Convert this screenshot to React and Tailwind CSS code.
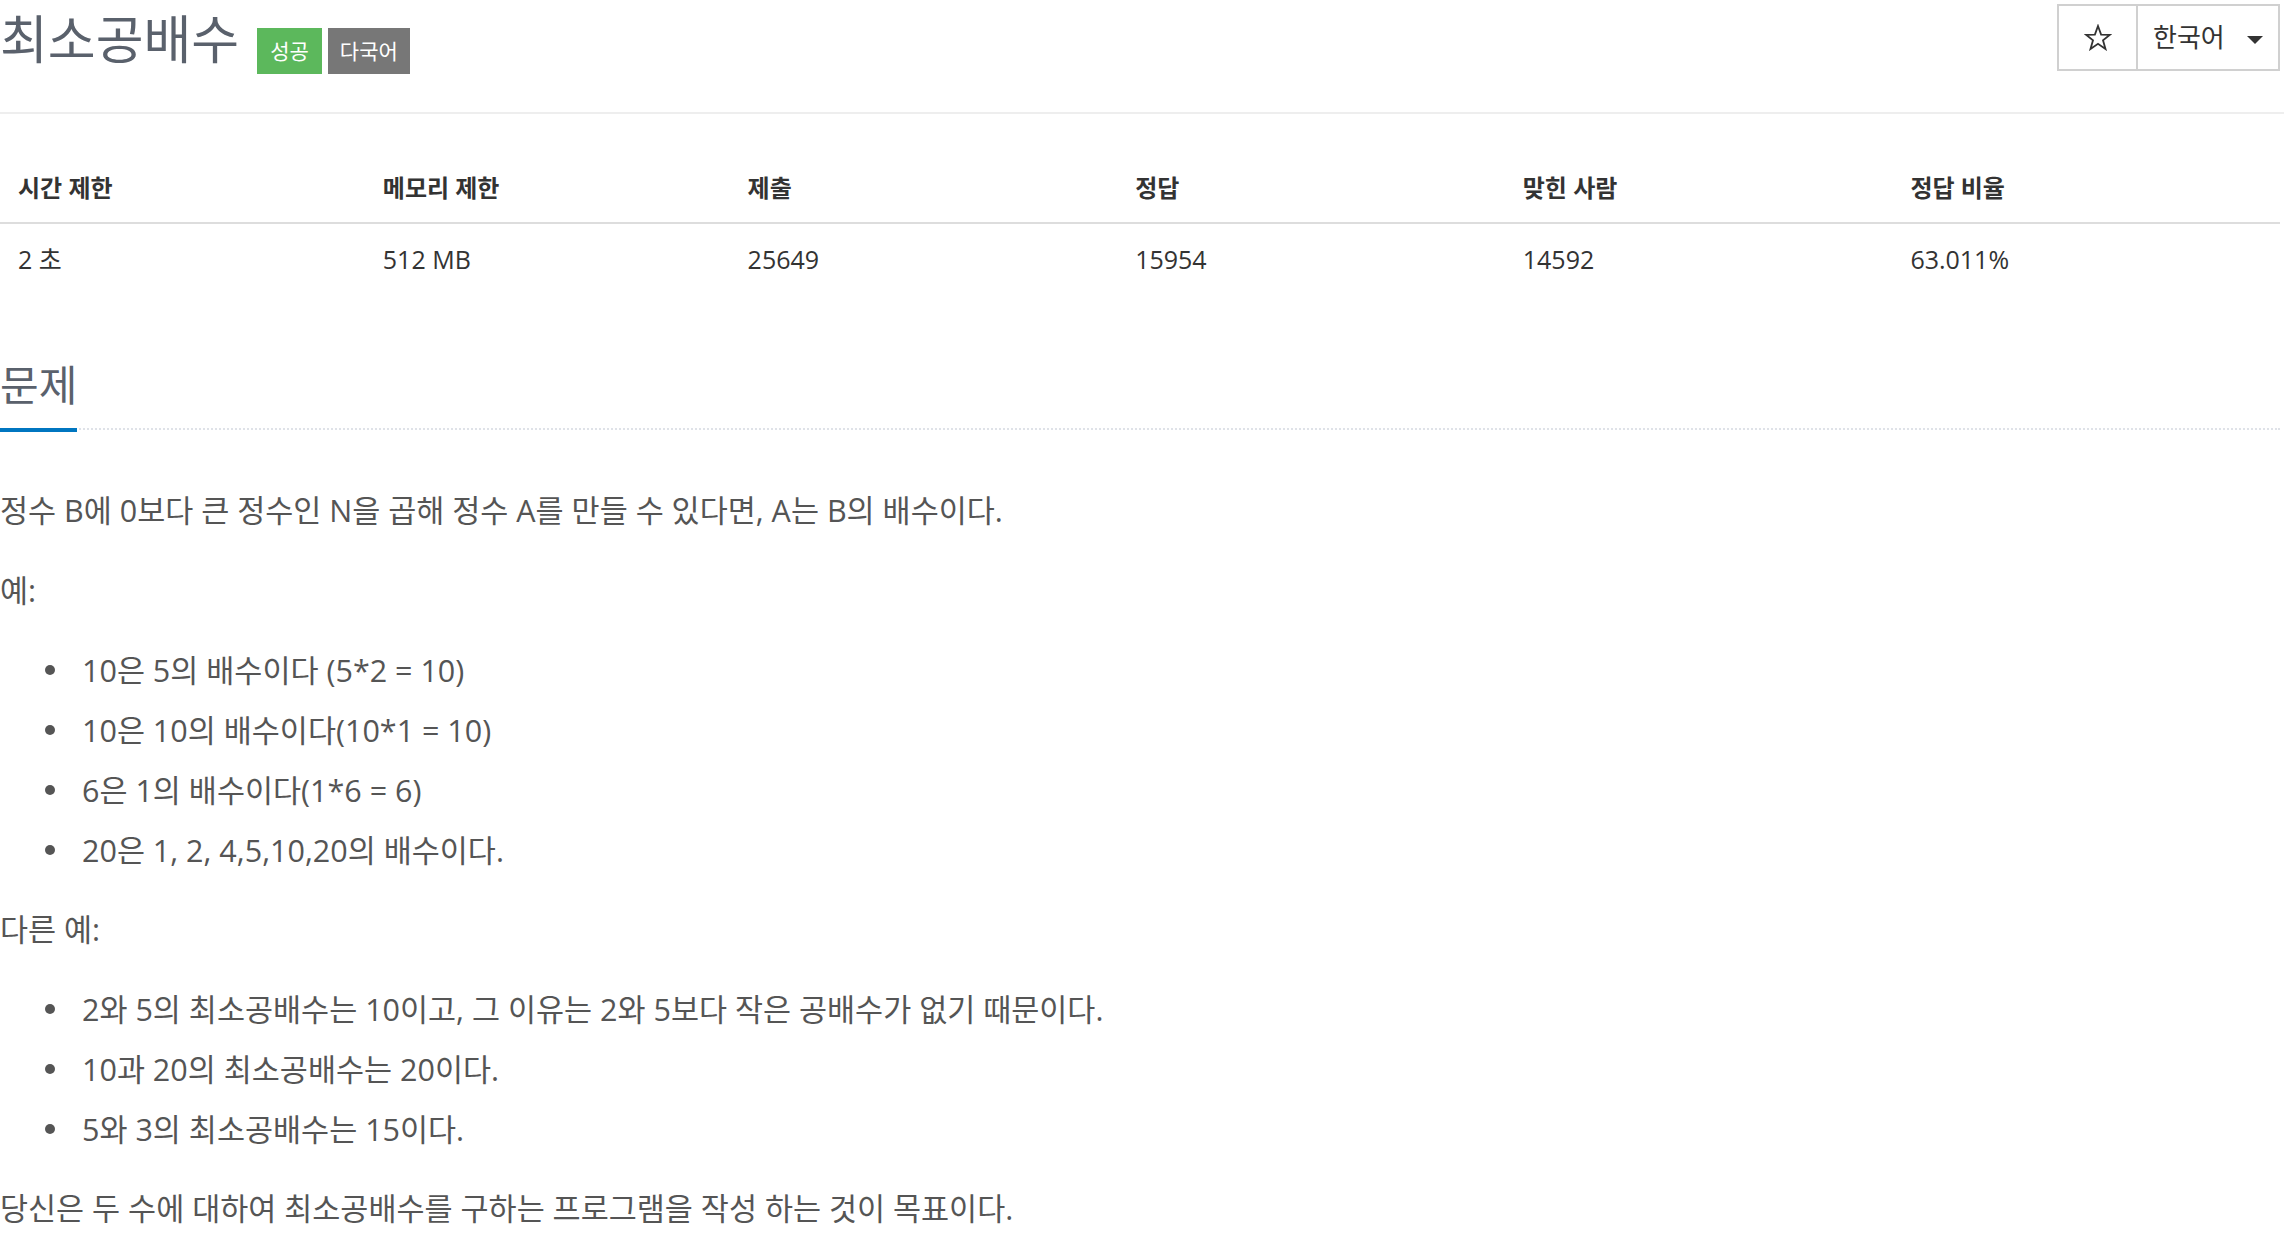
import { useState } from 'react';

const stats = [
  { label: '시간 제한', value: '2 초', width: 'w-[16%]' },
  { label: '메모리 제한', value: '512 MB', width: 'w-[16%]' },
  { label: '제출', value: '25649', width: 'w-[17%]' },
  { label: '정답', value: '15954', width: 'w-[17%]' },
  { label: '맞힌 사람', value: '14592', width: 'w-[17%]' },
  { label: '정답 비율', value: '63.011%', width: 'w-[17%]' },
];

const examples = [
  '10은 5의 배수이다 (5*2 = 10)',
  '10은 10의 배수이다(10*1 = 10)',
  '6은 1의 배수이다(1*6 = 6)',
  '20은 1, 2, 4,5,10,20의 배수이다.',
];

const otherExamples = [
  '2와 5의 최소공배수는 10이고, 그 이유는 2와 5보다 작은 공배수가 없기 때문이다.',
  '10과 20의 최소공배수는 20이다.',
  '5와 3의 최소공배수는 15이다.',
];

function Bullets({ items }) {
  return (
    <ul className="mb-[35px]">
      {items.map((text) => (
        <li key={text} className="flex items-center mb-[16px] last:mb-0 leading-[44px]">
          <span className="ml-[45px] w-[10px] h-[10px] rounded-full bg-[#555] shrink-0" />
          <span className="ml-[27px]">{text}</span>
        </li>
      ))}
    </ul>
  );
}

function StarIcon() {
  return (
    <svg width="28" height="27" viewBox="0 0 28 27" fill="none">
      <polygon
        points="14,2 17.1,10.6 26,10.8 19,16.3 21.5,25 14,19.8 6.5,25 9,16.3 2,10.8 10.9,10.6"
        stroke="#333"
        strokeWidth="1.8"
        strokeLinejoin="miter"
      />
    </svg>
  );
}

export default function App() {
  const [starred, setStarred] = useState(false);

  return (
    <div className="w-full min-h-screen bg-white font-['Open_Sans','Noto_Sans_CJK_KR',sans-serif] text-[#555]">
      <div className="flex items-start justify-between h-[114px] border-b-2 border-[#eee] pr-[4px]">
        <div className="flex items-start">
          <h1 className="text-[52px] leading-[78px] font-normal text-[#5a616c]">최소공배수</h1>
          <div className="flex gap-[6px] ml-[18px] mt-[28px]">
            <span className="h-[46px] px-[13px] flex items-center bg-[#5cb85c] text-white text-[21px] leading-none">성공</span>
            <span className="h-[46px] px-[12px] flex items-center bg-[#777] text-white text-[21px] leading-none">다국어</span>
          </div>
        </div>
        <div className="mt-[4px] flex h-[67px] border-2 border-[#d0d0d0]">
          <button
            type="button"
            onClick={() => setStarred((s) => !s)}
            className="w-[77px] flex items-center justify-center"
          >
            <StarIcon />
          </button>
          <button
            type="button"
            className="w-[142px] flex items-center border-l-2 border-[#d0d0d0] pl-[15px] pr-[15px] text-[26px] text-[#333]"
          >
            <span>한국어</span>
            <span className="ml-auto mt-[4px] w-0 h-0 border-l-[8px] border-r-[8px] border-t-[8px] border-l-transparent border-r-transparent border-t-[#333]" />
          </button>
        </div>
      </div>

      <div className="pr-[4px]">
        <table className="mt-[46px] w-full table-fixed border-collapse">
          <thead>
            <tr>
              {stats.map((s) => (
                <th
                  key={s.label}
                  className={`${s.width} text-left font-bold text-[24px] leading-[30px] text-[#333] pl-[18px] pt-[13px] pb-[19px] border-b-2 border-[#ddd]`}
                >
                  {s.label}
                </th>
              ))}
            </tr>
          </thead>
          <tbody>
            <tr>
              {stats.map((s) => (
                <td key={s.label} className="text-[25px] leading-[30px] text-[#333] pl-[18px] pt-[20px] pb-[20px]">
                  {s.value}
                </td>
              ))}
            </tr>
          </tbody>
        </table>

        <div className="mt-[67px] flex border-b-2 border-dotted border-[#dfe2e8]">
          <h2 className="-mb-[4px] border-b-4 border-[#0076c0] pb-[19px] text-[42px] leading-[48px] font-normal text-[#5a616c]">
            문제
          </h2>
        </div>

        <div className="mt-[58px] text-[30.5px] leading-[44px]">
          <p className="mb-[36px]">정수 B에 0보다 큰 정수인 N을 곱해 정수 A를 만들 수 있다면, A는 B의 배수이다.</p>
          <p className="mb-[36px]">예:</p>
          <Bullets items={examples} />
          <p className="mb-[36px]">다른 예:</p>
          <Bullets items={otherExamples} />
          <p className="mb-[36px]">당신은 두 수에 대하여 최소공배수를 구하는 프로그램을 작성 하는 것이 목표이다.</p>
        </div>
      </div>
    </div>
  );
}
